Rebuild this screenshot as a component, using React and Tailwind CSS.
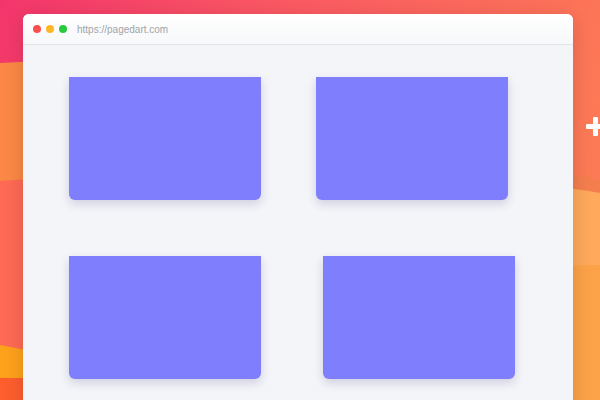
export default function App() {
  return (
    <div className="relative w-[600px] h-[400px] overflow-hidden" style={{ fontFamily: "'Liberation Sans', Arial, sans-serif" }}>
      <svg className="absolute inset-0" width="600" height="400" viewBox="0 0 600 400">
        <defs>
          <linearGradient id="bg" x1="0" y1="0" x2="1" y2="0.3">
            <stop offset="0" stopColor="#f3356c" />
            <stop offset="0.45" stopColor="#fb5a63" />
            <stop offset="1" stopColor="#fd7a56" />
          </linearGradient>
        </defs>
        <rect width="600" height="400" fill="url(#bg)" />
        <path d="M0 63 L60 60 L60 400 L0 400 Z" fill="#fb8846" />
        <path d="M0 181 L60 177 L60 400 L0 400 Z" fill="#fe6a55" />
        <path d="M0 345 Q30 350 60 360 L60 400 L0 400 Z" fill="#fea11b" />
        <path d="M0 378 L60 378 L60 400 L0 400 Z" fill="#fe5e2e" />
        <path d="M540 170 Q570 172 600 180 L600 400 L540 400 Z" fill="#f47e4e" />
        <path d="M540 188 Q570 187 600 193 L600 400 L540 400 Z" fill="#fea95b" />
        <path d="M540 265 L600 265 L600 400 L540 400 Z" fill="#fca249" />
        <rect x="586" y="124" width="16" height="5" rx="1" fill="#ffffff" />
        <rect x="593" y="117" width="5" height="19" rx="1" fill="#ffffff" />
      </svg>

      <div className="relative ml-[23px] mt-[14px] w-[550px] h-[420px] rounded-md overflow-hidden bg-[#f4f5f9] shadow-[0_4px_20px_rgba(0,0,0,0.15)]">
        <div className="h-[31px] bg-gradient-to-b from-white to-[#f7f8fa] border-b border-[#e3e5ea] flex items-center pl-[10px] gap-[5px]">
          <span className="w-[8px] h-[8px] rounded-full bg-[#fb4f4f]" />
          <span className="w-[8px] h-[8px] rounded-full bg-[#fbb726]" />
          <span className="w-[8px] h-[8px] rounded-full bg-[#27c93f]" />
          <span className="ml-[5px] text-[10px] text-[#a0a3a8]">https://pagedart.com</span>
        </div>
        <div className="pl-[46px] pt-[32px] grid grid-cols-[192px_192px] gap-x-[55px] gap-y-[56px]">
          <div className="w-[192px] h-[123px] bg-[#7f7ffe] rounded-b-md shadow-[0_4px_10px_rgba(60,60,120,0.2)]" />
          <div className="w-[192px] h-[123px] bg-[#7f7ffe] rounded-b-md shadow-[0_4px_10px_rgba(60,60,120,0.2)]" />
          <div className="w-[192px] h-[123px] bg-[#7f7ffe] rounded-b-md shadow-[0_4px_10px_rgba(60,60,120,0.2)]" />
          <div className="w-[192px] h-[123px] ml-[7px] bg-[#7f7ffe] rounded-b-md shadow-[0_4px_10px_rgba(60,60,120,0.2)]" />
        </div>
      </div>
    </div>
  );
}
